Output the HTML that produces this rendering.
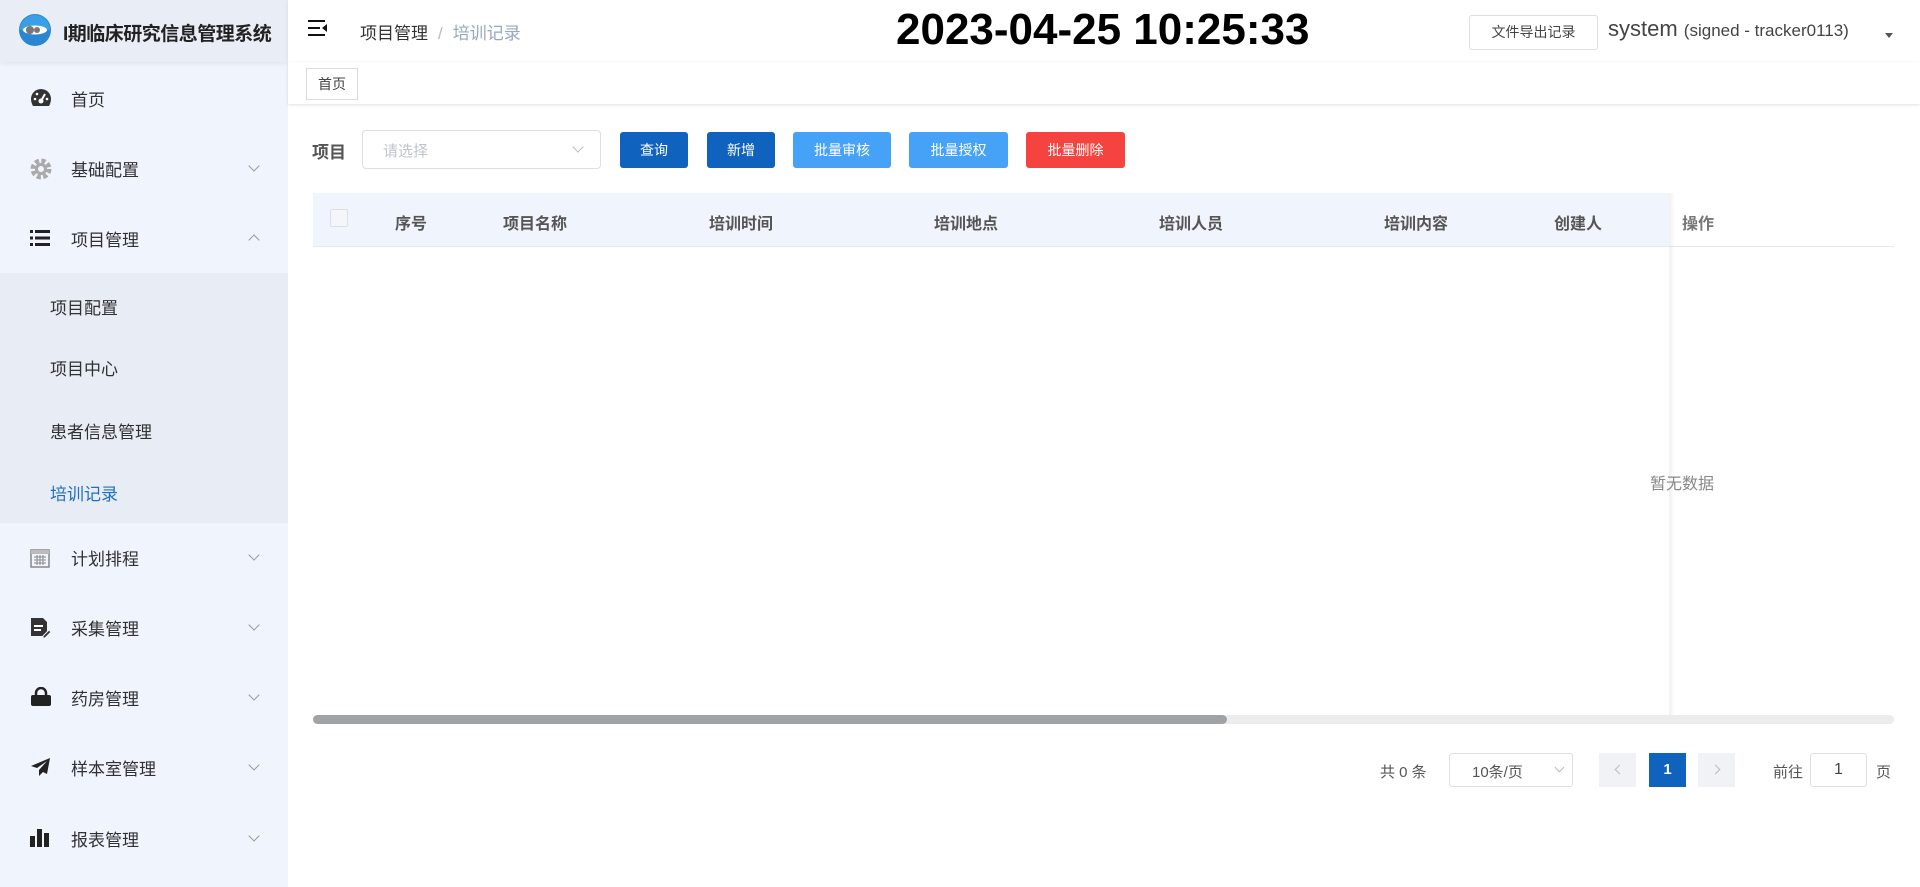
<!DOCTYPE html>
<html><head><meta charset="utf-8"><style>
*{box-sizing:border-box;margin:0;padding:0}
body{width:1920px;height:887px;overflow:hidden;font-family:"Liberation Sans","Noto Sans CJK SC",sans-serif;background:#fff;position:relative;color:#303133}
.abs{position:absolute}
#side{left:0;top:0;width:288px;height:887px;background:#f0f4fc}
#logo{left:0;top:0;width:288px;height:62px;background:#e9edf5;box-shadow:0 2px 4px rgba(0,0,0,.06)}
.mi{position:absolute;left:0;width:288px;font-size:17px;color:#303133}
.mi .t{position:absolute;left:71px;top:-12px}
.mi .ar{position:absolute;left:250px;top:-6px;width:8px;height:8px;border-right:1px solid #999;border-bottom:1px solid #999;transform:rotate(45deg)}
.mi .up{transform:rotate(-135deg);top:-2px}
.mi svg{position:absolute;left:30px;top:-10px}
#sub{left:0;top:273px;width:288px;height:250px;background:#e8ecf4}
.si{position:absolute;left:50px;font-size:17px;color:#303133}
.btn{position:absolute;top:132px;height:36px;border-radius:3px;color:#fff;font-size:14px;text-align:center;line-height:36px}
.th{position:absolute;top:210px;font-size:16px;font-weight:bold;color:#555}
</style></head><body>
<div id="side" class="abs"></div>
<div id="logo" class="abs">
<svg class="abs" style="left:18px;top:13px" width="34" height="34" viewBox="0 0 34 34"><circle cx="17" cy="17" r="16" fill="#2b86d2"/><path d="M2 17a15 15 0 0 1 30 0z" fill="#3aa0e6"/><ellipse cx="17" cy="17" rx="12" ry="4.5" fill="#fff"/><circle cx="12" cy="17" r="4" fill="#777"/><circle cx="19" cy="17" r="3" fill="#777"/></svg>
<div class="abs" style="left:63px;top:19px;font-size:19px;font-weight:bold;color:#222;letter-spacing:-.5px">I期临床研究信息管理系统</div>
</div>
<div class="mi" style="top:98px"><svg width="22" height="20" viewBox="0 0 22 20"><path d="M11 1A10 10 0 0 0 1 11c0 3 1 5 2 7h16c1-2 2-4 2-7A10 10 0 0 0 11 1z" fill="#333"/><circle cx="11" cy="13" r="2.5" fill="#fff"/><path d="M11 13l4-7" stroke="#fff" stroke-width="2"/><circle cx="5" cy="11" r="1.3" fill="#fff"/><circle cx="7" cy="6" r="1.3" fill="#fff"/><circle cx="17" cy="11" r="1.3" fill="#fff"/></svg><span class="t">首页</span></div>
<div class="mi" style="top:168px"><svg width="22" height="22" viewBox="0 0 22 22"><circle cx="11" cy="11" r="8" fill="none" stroke="#aaa" stroke-width="5" stroke-dasharray="4 2.3"/><circle cx="11" cy="11" r="6" fill="#aaa"/><circle cx="11" cy="11" r="3" fill="#f0f4fc"/></svg><span class="t">基础配置</span><i class="ar"></i></div>
<div class="mi" style="top:238px"><svg width="22" height="20" viewBox="0 0 22 20"><rect x="0" y="2" width="3" height="3" fill="#222"/><rect x="5" y="2" width="15" height="3" fill="#222"/><rect x="0" y="8.5" width="3" height="3" fill="#222"/><rect x="5" y="8.5" width="15" height="3" fill="#222"/><rect x="0" y="15" width="3" height="3" fill="#222"/><rect x="5" y="15" width="15" height="3" fill="#222"/></svg><span class="t">项目管理</span><i class="ar up"></i></div>
<div id="sub" class="abs"></div>
<div class="si" style="top:294px">项目配置</div>
<div class="si" style="top:355px">项目中心</div>
<div class="si" style="top:418px">患者信息管理</div>
<div class="si" style="top:480px;color:#1e6fc9">培训记录</div>
<div class="mi" style="top:557px"><svg width="20" height="22" viewBox="0 0 20 22"><rect x="1" y="3" width="18" height="17" fill="none" stroke="#888" stroke-width="1.5"/><rect x="1" y="3" width="18" height="4" fill="#bbb"/><path d="M4 10h12M4 13h12M4 16h12M7 8v10M10 8v10M13 8v10" stroke="#888"/></svg><span class="t">计划排程</span><i class="ar"></i></div>
<div class="mi" style="top:627px"><svg width="22" height="22" viewBox="0 0 22 22"><path d="M1 1h12l4 4v14H1z" fill="#333"/><path d="M4 9h9M4 13h7" stroke="#fff" stroke-width="2"/><path d="M13 19l6-6 2 2-6 6h-2z" fill="#333" stroke="#f0f4fc"/></svg><span class="t">采集管理</span><i class="ar"></i></div>
<div class="mi" style="top:697px"><svg width="22" height="20" viewBox="0 0 22 20"><path d="M6 8V6a5 5 0 0 1 10 0v2" fill="none" stroke="#222" stroke-width="2.5"/><rect x="1" y="8" width="20" height="11" rx="2" fill="#222"/></svg><span class="t">药房管理</span><i class="ar"></i></div>
<div class="mi" style="top:767px"><svg width="22" height="20" viewBox="0 0 22 20"><path d="M20 1L1 9l6 2 10-7-8 9v6l4-4 4 2z" fill="#222"/></svg><span class="t">样本室管理</span><i class="ar"></i></div>
<div class="mi" style="top:838px"><svg width="20" height="20" viewBox="0 0 20 20"><rect x="0" y="8" width="5" height="11" fill="#222"/><rect x="7" y="1" width="5" height="18" fill="#222"/><rect x="14" y="5" width="5" height="14" fill="#222"/></svg><span class="t">报表管理</span><i class="ar"></i></div>

<!-- header -->
<div class="abs" style="left:288px;top:0;width:1632px;height:62px;background:#fff;box-shadow:0 1px 4px rgba(0,0,0,.08)"></div>
<svg class="abs" style="left:308px;top:20px" width="20" height="18" viewBox="0 0 20 18"><path d="M0 1h17M0 8h12M0 15h17" stroke="#111" stroke-width="2"/><path d="M19 4v8l-5-4z" fill="#111"/></svg>
<div class="abs" style="left:360px;top:19px;font-size:17px;color:#303133">项目管理<span style="color:#bbb;margin:0 10px">/</span><span style="color:#97a8be">培训记录</span></div>
<div class="abs" style="left:896px;top:5px;font-size:44px;font-weight:bold;color:#000">2023-04-25 10:25:33</div>
<div class="abs" style="left:1469px;top:15px;width:129px;height:35px;border:1px solid #dcdfe6;border-radius:3px;font-size:14px;text-align:center;line-height:33px;color:#444">文件导出记录</div>
<div class="abs" style="left:1608px;top:16px;font-size:22px;color:#444">system <span style="font-size:17px">(signed - tracker0113)</span></div>
<div class="abs" style="left:1885px;top:33px;border:4px solid transparent;border-top:5px solid #555"></div>
<!-- tags -->
<div class="abs" style="left:288px;top:62px;width:1632px;height:42px;background:#fff;box-shadow:0 1px 3px rgba(0,0,0,.12)"></div>
<div class="abs" style="left:306px;top:68px;width:52px;height:32px;border:1px solid #d8dce5;font-size:14px;text-align:center;line-height:30px;color:#444">首页</div>
<!-- filter -->
<div class="abs" style="left:312px;top:138px;font-size:17px;font-weight:bold;color:#555">项目</div>
<div class="abs" style="left:362px;top:130px;width:239px;height:39px;border:1px solid #dcdfe6;border-radius:4px;font-size:15px;color:#c0c4cc;padding:9px 20px">请选择</div>
<div class="abs" style="left:574px;top:143px;width:8px;height:8px;border-right:1px solid #bbb;border-bottom:1px solid #bbb;transform:rotate(45deg)"></div>
<div class="btn" style="left:620px;width:68px;background:#0f62bd">查询</div>
<div class="btn" style="left:707px;width:68px;background:#0f62bd">新增</div>
<div class="btn" style="left:793px;width:98px;background:#45a2f7">批量审核</div>
<div class="btn" style="left:909px;width:99px;background:#45a2f7">批量授权</div>
<div class="btn" style="left:1026px;width:99px;background:#f5443f">批量删除</div>
<!-- table -->
<div class="abs" style="left:313px;top:193px;width:1356px;height:53px;background:#f0f4fc"></div>
<div class="abs" style="left:313px;top:246px;width:1581px;height:1px;background:#e4e8ef"></div>
<div class="abs" style="left:330px;top:209px;width:18px;height:18px;border:1px solid #dcdfe6;border-radius:2px;background:#f4f6fa"></div>
<div class="th" style="left:395px">序号</div>
<div class="th" style="left:503px">项目名称</div>
<div class="th" style="left:709px">培训时间</div>
<div class="th" style="left:934px">培训地点</div>
<div class="th" style="left:1159px">培训人员</div>
<div class="th" style="left:1384px">培训内容</div>
<div class="th" style="left:1554px">创建人</div>
<div class="abs" style="left:1669px;top:193px;width:6px;height:530px;background:linear-gradient(90deg,rgba(0,0,0,.06),rgba(0,0,0,0))"></div>
<div class="th" style="left:1682px;color:#777">操作</div>
<div class="abs" style="left:1650px;top:470px;font-size:16px;color:#888">暂无数据</div>
<div class="abs" style="left:313px;top:715px;width:1581px;height:9px;border-radius:5px;background:#ececec"></div>
<div class="abs" style="left:313px;top:715px;width:914px;height:9px;border-radius:5px;background:#a0a3a6"></div>
<!-- pagination -->
<div class="abs" style="left:1380px;top:761px;font-size:15px;color:#555">共 0 条</div>
<div class="abs" style="left:1449px;top:753px;width:124px;height:34px;border:1px solid #dcdfe6;border-radius:3px;font-size:15px;color:#555;padding:7px 22px">10条/页</div>
<div class="abs" style="left:1556px;top:764px;width:7px;height:7px;border-right:1px solid #bbb;border-bottom:1px solid #bbb;transform:rotate(45deg)"></div>
<div class="abs" style="left:1599px;top:753px;width:37px;height:34px;background:#f0f2f5"></div>
<div class="abs" style="left:1616px;top:766px;width:7px;height:7px;border-left:1px solid #bbb;border-bottom:1px solid #bbb;transform:rotate(45deg)"></div>
<div class="abs" style="left:1649px;top:753px;width:37px;height:34px;background:#0f62bd;color:#fff;font-weight:bold;font-size:15px;text-align:center;line-height:34px">1</div>
<div class="abs" style="left:1698px;top:753px;width:37px;height:34px;background:#f0f2f5"></div>
<div class="abs" style="left:1712px;top:766px;width:7px;height:7px;border-right:1px solid #bbb;border-top:1px solid #bbb;transform:rotate(45deg)"></div>
<div class="abs" style="left:1773px;top:761px;font-size:15px;color:#555">前往</div>
<div class="abs" style="left:1810px;top:753px;width:57px;height:34px;border:1px solid #dcdfe6;border-radius:3px;font-size:16px;text-align:center;line-height:32px;color:#444">1</div>
<div class="abs" style="left:1876px;top:761px;font-size:15px;color:#555">页</div>
</body></html>
